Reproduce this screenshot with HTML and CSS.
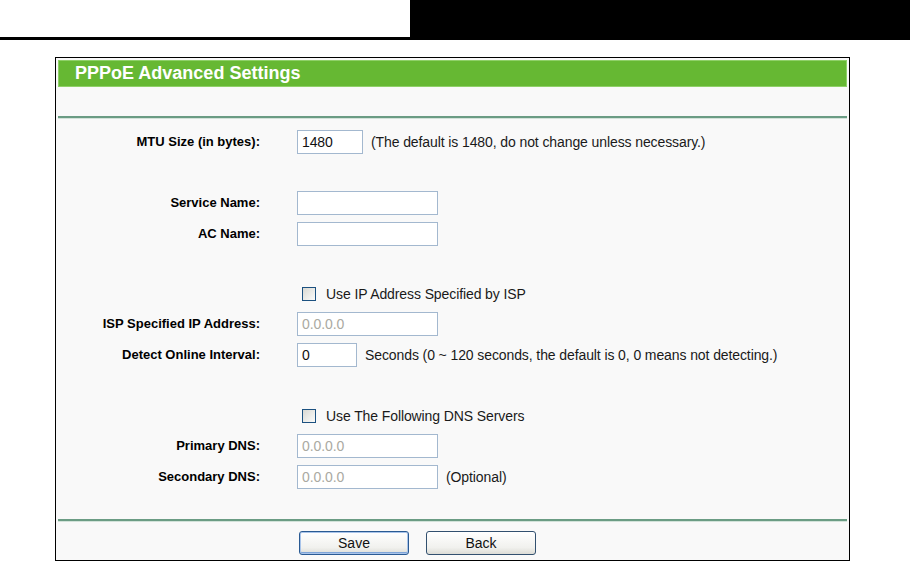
FILE: index.html
```html
<!DOCTYPE html>
<html lang="en">
<head>
    <meta charset="UTF-8">
    <meta name="viewport" content="width=device-width, initial-scale=1.0">
    <title>PPPoE Advanced Settings</title>
    <link rel="stylesheet" href="styles.css">
</head>
<body>

    <div class="topbar">
        <div class="topbar-left"></div>
        <div class="topbar-right"></div>
    </div>

    <div class="panel">
        <div class="panel-title">PPPoE Advanced Settings</div>
        <div class="panel-space"></div>
        <div class="divider"></div>

        <div class="form">
            <div class="row">
                <label>MTU Size (in bytes):</label>
                <div class="field">
                    <input class="txt txt-mtu" type="text" value="1480">
                    <span class="hint">(The default is 1480, do not change unless necessary.)</span>
                </div>
            </div>

            <div class="spacer spacer-30"></div>

            <div class="row">
                <label>Service Name:</label>
                <div class="field"><input class="txt" type="text"></div>
            </div>
            <div class="row">
                <label>AC Name:</label>
                <div class="field"><input class="txt" type="text"></div>
            </div>

            <div class="spacer spacer-31"></div>

            <div class="row row-check">
                <span></span>
                <div class="field">
                    <input class="check" type="checkbox">
                    <span class="hint">Use IP Address Specified by ISP</span>
                </div>
            </div>
            <div class="row">
                <label>ISP Specified IP Address:</label>
                <div class="field"><input class="txt" type="text" placeholder="0.0.0.0"></div>
            </div>
            <div class="row">
                <label>Detect Online Interval:</label>
                <div class="field">
                    <input class="txt txt-interval" type="text" value="0">
                    <span class="hint">Seconds (0 ~ 120 seconds, the default is 0, 0 means not detecting.)</span>
                </div>
            </div>

            <div class="spacer spacer-32"></div>

            <div class="row row-check">
                <span></span>
                <div class="field">
                    <input class="check" type="checkbox">
                    <span class="hint">Use The Following DNS Servers</span>
                </div>
            </div>
            <div class="row">
                <label>Primary DNS:</label>
                <div class="field"><input class="txt" type="text" placeholder="0.0.0.0"></div>
            </div>
            <div class="row">
                <label>Secondary DNS:</label>
                <div class="field">
                    <input class="txt" type="text" placeholder="0.0.0.0">
                    <span class="hint">(Optional)</span>
                </div>
            </div>

            <div class="spacer spacer-27"></div>
        </div>

        <div class="divider"></div>

        <div class="buttons">
            <button class="btn btn-default">Save</button>
            <button class="btn">Back</button>
        </div>
    </div>

</body>
</html>
```

FILE: styles.css
```css
/* PPPoE advanced settings page */
body {
    margin: 0;
    background-color: #fff;
    font-family: "Liberation Sans", Arial, sans-serif;
    color: #1a1a1a;
}

/* Header strip at the top of the page */
.topbar {
    display: flex;
    height: 40px;
}

.topbar-left {
    flex: 0 0 410px;
    border-bottom: 3px solid #000;
}

.topbar-right {
    flex: 1;
    background-color: #000;
}

/* Settings panel */
.panel {
    box-sizing: border-box;
    width: 795px;
    margin: 17px 0 0 55px;
    padding: 2px;
    border: 1px solid #000;
    background-color: #f9f9f9;
}

.panel-title {
    height: 27px;
    box-sizing: border-box;
    padding-left: 16px;
    border: 1px solid #8fd068;
    background-color: #66b833;
    color: #fff;
    font-size: 18px;
    font-weight: bold;
    line-height: 25px;
}

.panel-space {
    height: 29px;
}

.divider {
    height: 2px;
    background-color: #6b9c84;
    box-shadow: 0 1px 0 #d3e3da;
}

.form {
    padding-top: 8px;
}

.row {
    display: grid;
    grid-template-columns: 202px 1fr;
    column-gap: 37px;
    align-items: center;
    height: 31px;
}

.row-check {
    height: 28px;
}

.row label {
    text-align: right;
    font-size: 13px;
    font-weight: bold;
    color: #000;
}

.field {
    display: flex;
    align-items: center;
}

.spacer-27 { height: 27px; }
.spacer-30 { height: 30px; }
.spacer-31 { height: 31px; }
.spacer-32 { height: 32px; }

.hint {
    margin-left: 8px;
    font-size: 14px;
    letter-spacing: -0.1px;
    white-space: nowrap;
}

/* Text boxes */
.txt {
    box-sizing: border-box;
    width: 141px;
    height: 24px;
    margin: 0;
    padding: 0 4px;
    border: 1px solid #a3b8cf;
    background-color: #fff;
    font-family: inherit;
    font-size: 14px;
    letter-spacing: -0.1px;
    color: #111;
    outline: none;
}

.txt::placeholder {
    color: #aaa9a2;
}

.txt-mtu {
    width: 66px;
}

.txt-interval {
    width: 60px;
}

/* Checkboxes */
.check {
    appearance: none;
    width: 14px;
    height: 14px;
    margin: 0 0 0 5px;
    border: 1px solid #1c5180;
    background: linear-gradient(135deg, #d9d9d3, #fbfbfa);
}

.check + .hint {
    margin-left: 10px;
}

/* Buttons */
.buttons {
    display: flex;
    gap: 17px;
    padding: 10px 0 3px 241px;
}

.btn {
    box-sizing: border-box;
    width: 110px;
    height: 24px;
    padding: 0;
    border: 1px solid #32506f;
    border-radius: 3px;
    background: linear-gradient(#ffffff, #f1f1ee 70%, #dcdcd6);
    font-family: inherit;
    font-size: 14px;
    color: #111;
    cursor: pointer;
}

.btn-default {
    border-color: #2a5a93;
    box-shadow: inset 0 0 0 1px #a9c4ea, inset 0 -2px 0 #7ea4d8;
}
```
